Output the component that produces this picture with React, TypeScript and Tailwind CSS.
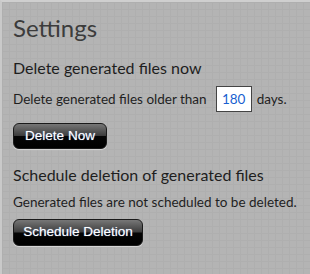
// Settings panel: delete / schedule deletion of generated files
const bodyFont = "font-['Lato','Segoe_UI',sans-serif]";

function GlossButton({ label, className }: { label: string; className: string }) {
  return (
    <button
      type="button"
      className={`relative overflow-hidden rounded-[6px] border border-[#1a1a1a] bg-[linear-gradient(to_bottom,#777_0%,#3d3d3d_48%,#050505_52%,#000_100%)] font-['Liberation_Sans',Arial,sans-serif] text-[13.5px] text-white shadow-[0_1px_1px_rgba(255,255,255,0.5)] [text-shadow:0_0_1px_rgba(150,190,255,0.8)] ${className}`}
    >
      {label}
    </button>
  );
}

export default function App() {
  return (
    <div
      className={`h-[274px] w-[310px] overflow-hidden border-l-2 border-t-2 border-l-[#c9c9c9] border-t-[#cfcfcf] bg-[#b4b4b4] bg-[linear-gradient(#afafaf_1px,transparent_1px),linear-gradient(90deg,#afafaf_1px,transparent_1px)] bg-[size:7px_7px] pl-[11px] pt-[11px] text-[#1f1f1f] ${bodyFont}`}
    >
      <h1 className="text-[24px] leading-[30px] text-[#3c3c3c]">Settings</h1>

      <h2 className="mt-[14px] text-[16px] leading-[22px] text-[#1e1e1e]">
        Delete generated files now
      </h2>
      <div className="mt-[7px] flex items-center text-[13.5px]">
        <span>Delete generated files older than</span>
        <input
          readOnly
          value="180"
          className="ml-[9px] mr-[5px] h-[26px] w-[36px] border border-[#444] bg-white text-center text-[13.5px] text-[#1a5fd0] outline-none"
        />
        <span>days.</span>
      </div>
      <GlossButton label="Delete Now" className="mt-[11px] h-[26px] w-[94px]" />

      <h2 className="mt-[15px] text-[16px] leading-[22px] text-[#1e1e1e]">
        Schedule deletion of generated files
      </h2>
      <p className="mt-[7px] text-[13.5px] leading-[18px]">
        Generated files are not scheduled to be deleted.
      </p>
      <GlossButton label="Schedule Deletion" className="mt-[8px] h-[27px] w-[130px]" />
    </div>
  );
}
